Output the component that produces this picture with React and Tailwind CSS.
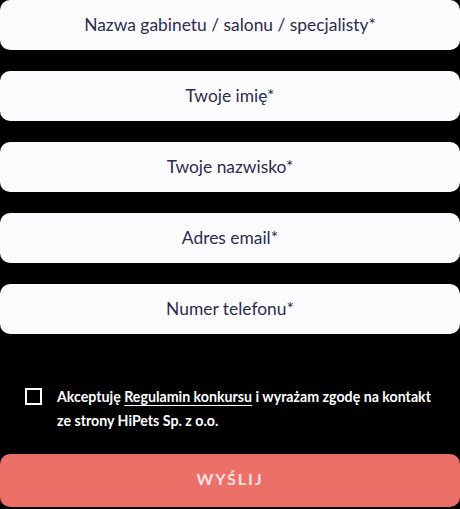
export default function App() {
  const fields = [
    "Nazwa gabinetu / salonu / specjalisty*",
    "Twoje imię*",
    "Twoje nazwisko*",
    "Adres email*",
    "Numer telefonu*",
  ];
  return (
    <div className="w-[460px] h-[509px] bg-black overflow-hidden" style={{ fontFamily: "Lato, 'Noto Sans', sans-serif" }}>
      <div className="flex flex-col gap-[21px]">
        {fields.map((f) => (
          <div
            key={f}
            className="h-[50px] rounded-[10px] bg-[#fcfcff] flex items-center justify-center text-[17.4px] text-[#2c2c4c]"
          >
            {f}
          </div>
        ))}
      </div>
      <div className="flex items-start mt-[51px] pl-[25px] pr-[20px]">
        <div className="w-[17px] h-[17px] border-2 border-white mt-[3px] shrink-0" />
        <p className="ml-[15px] text-white text-[14.2px] font-bold leading-[24px]">
          Akceptuję <span className="underline underline-offset-[3px]">Regulamin konkursu</span> i wyrażam zgodę na kontakt ze strony HiPets Sp. z o.o.
        </p>
      </div>
      <div className="mt-[21px] h-[53px] pb-[3px] rounded-[10px] bg-[#ec6f68] flex items-center justify-center text-[#fde4e2] text-[16px] font-bold tracking-[0.12em]">
        WYŚLIJ
      </div>
    </div>
  );
}
